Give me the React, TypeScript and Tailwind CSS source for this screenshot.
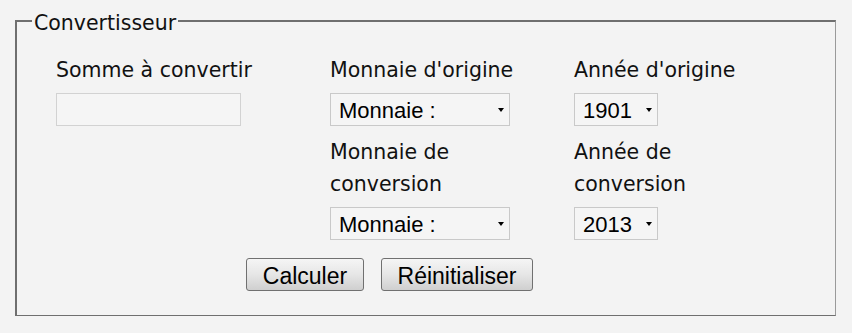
import type { ReactNode } from "react"

const labelFont = { fontFamily: '"DejaVu Sans", Verdana, sans-serif' }
const controlFont = { fontFamily: '"Liberation Sans", Arial, sans-serif' }

function Label({ children }: { children: ReactNode }) {
  return (
    <div className="text-[20.5px] leading-[32px] text-[#111]" style={labelFont}>
      {children}
    </div>
  )
}

function Select({ value, width }: { value: string; width: string }) {
  return (
    <div className={`relative mt-[7px] h-[33px] ${width}`}>
      <select
        defaultValue={value}
        className="h-full w-full appearance-none border border-[#c9c9c9] bg-[#f5f5f5] pl-[8px] text-[22px] text-black outline-none"
        style={controlFont}
      >
        <option>{value}</option>
      </select>
      <span className="pointer-events-none absolute right-[6px] top-[15px] h-0 w-0 border-x-[3px] border-t-[4px] border-x-transparent border-t-black" />
    </div>
  )
}

function Button({ children, width }: { children: ReactNode; width: string }) {
  return (
    <button
      className={`h-[33px] ${width} rounded-[3px] border border-[#707070] bg-gradient-to-b from-[#f5f5f5] via-[#e6e6e6] to-[#cfcfcf] text-[23px] text-black`}
      style={controlFont}
    >
      {children}
    </button>
  )
}

export default function App() {
  return (
    <div className="h-[333px] w-[852px] overflow-hidden bg-[#f3f3f3] pt-[7px]">
      <fieldset className="ml-[15px] w-[821px] border-b border-l-2 border-r border-t-2 border-[#6f6f6f] border-r-[#9a9a9a] pb-[24px] pl-[15px]">
        <legend className="px-[2px] pt-[4px] text-[20.5px] leading-[24px] text-[#111]" style={labelFont}>
          Convertisseur
        </legend>

        <div className="ml-[24px] pt-[19px]">
          <div className="grid grid-cols-[274px_244px_200px]">
            <div>
              <Label>Somme à convertir</Label>
              <input className="mt-[7px] h-[33px] w-[185px] border border-[#d2d2d2] bg-[#f5f5f5] outline-none" />
            </div>
            <div>
              <Label>Monnaie d'origine</Label>
              <Select value="Monnaie :" width="w-[180px]" />
            </div>
            <div>
              <Label>Année d'origine</Label>
              <Select value="1901" width="w-[84px]" />
            </div>

            <div />
            <div className="mt-[10px]">
              <Label>
                Monnaie de
                <br />
                conversion
              </Label>
              <Select value="Monnaie :" width="w-[180px]" />
            </div>
            <div className="mt-[10px]">
              <Label>
                Année de
                <br />
                conversion
              </Label>
              <Select value="2013" width="w-[84px]" />
            </div>
          </div>

          <div className="ml-[190px] mt-[18px] flex gap-[17px]">
            <Button width="w-[118px]">Calculer</Button>
            <Button width="w-[152px]">Réinitialiser</Button>
          </div>
        </div>
      </fieldset>
    </div>
  )
}
